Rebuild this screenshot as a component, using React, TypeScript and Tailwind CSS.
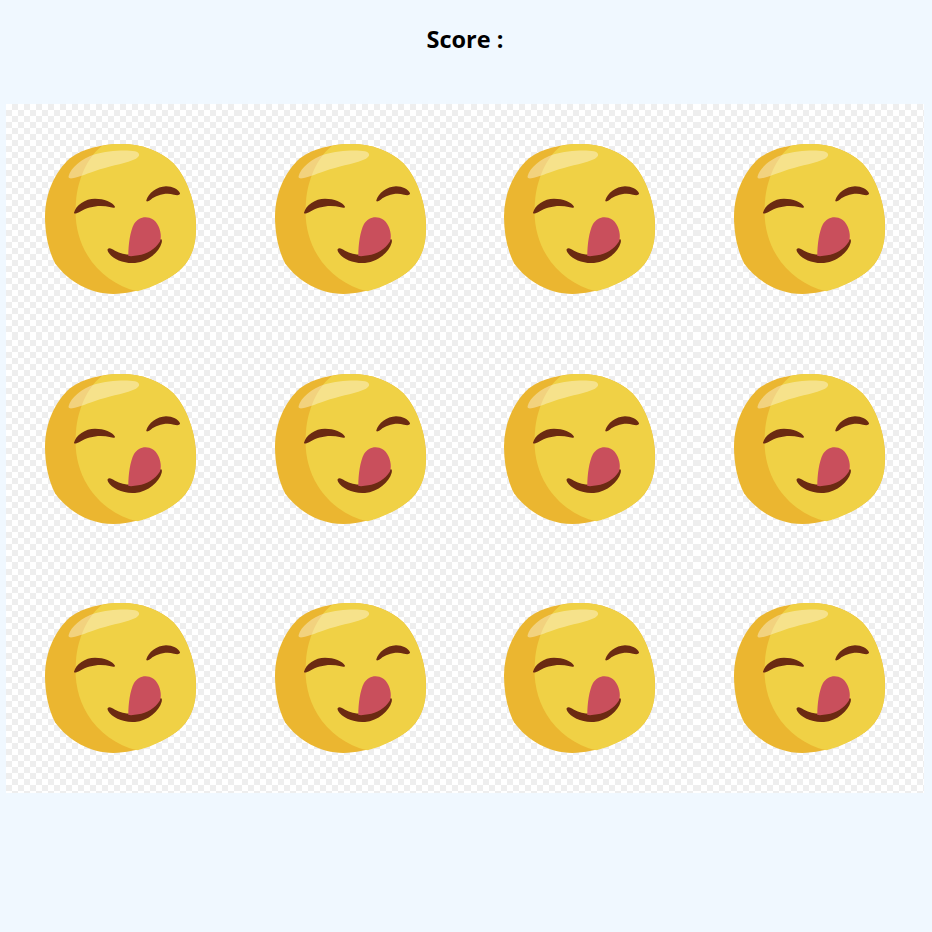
import React from 'react';

const Face = () => (
  <svg viewBox="18 42 688.5 688.5" className="block h-full w-full">
    {/* darker rim */}
    <path
      d="M365 162C425 162 480 182 520 220C560 262 588 340 588 410C588 460 578 500 545 535C505 575 410 612 340 612C270 612 205 575 165 520C145 480 135 430 135 380C135 310 165 245 210 205C250 175 305 162 365 162Z"
      fill="#ebb630"
    />
    {/* lighter face */}
    <path
      d="M305 168C325 163 345 162 365 162C425 162 480 182 520 220C560 262 588 340 588 410C588 460 578 500 545 535C515 565 460 592 412 604C350 590 295 550 262 495C235 450 222 395 228 335C233 270 260 205 305 168Z"
      fill="#f0d145"
    />
    {/* highlight */}
    <path
      d="M206 258C212 235 245 205 285 193C320 183 375 178 405 184C420 188 422 198 408 206C380 220 340 225 300 238C265 250 235 262 218 265C208 266 204 264 206 258Z"
      fill="#fff"
      fillOpacity="0.38"
    />
    {/* eyes */}
    <path
      d="M222 368C228 345 255 326 285 326C312 326 338 336 345 350C346 353 340 354 332 352C300 343 265 350 240 365C230 371 221 372 222 368Z"
      fill="#6b2a12"
    />
    <path
      d="M439 331C445 310 470 290 498 289C518 289 535 298 540 310C541 315 533 317 522 314C495 307 470 316 452 329C444 335 438 336 439 331Z"
      fill="#6b2a12"
    />
    {/* mouth */}
    <path
      d="M323 478C327 472 335 476 345 482C375 498 410 498 440 482C458 472 472 460 480 449C485 446 487 450 485 458C478 485 445 515 405 519C370 522 335 505 325 487C323 483 322 480 323 478Z"
      fill="#6b2a12"
    />
    {/* tongue */}
    <path
      d="M385 498C385 465 390 425 402 402C412 385 430 378 448 383C468 389 480 410 482 432C483 442 482 450 479 456C465 478 440 492 415 496C405 498 395 499 385 498Z"
      fill="#c94f5c"
    />
  </svg>
);

export default function App() {
  const cells = Array.from({ length: 12 }, (_, i) => i);

  return (
    <div className="min-h-[932px] bg-[#f0f8ff] font-['Open_Sans',sans-serif]">
      <h1 className="flex h-[104px] items-start justify-center pt-[23px] pr-[2px] text-[23.5px] leading-[32px] font-bold text-black">
        Score :
      </h1>
      <div className="ml-[6px] grid w-[918px] grid-cols-4 grid-rows-[repeat(3,229.5px)]">
        {cells.map(i => (
          <div
            key={i}
            className="bg-[repeating-conic-gradient(#eeeeee_0_25%,#ffffff_0_50%)] bg-[length:12px_12px]"
          >
            <Face />
          </div>
        ))}
      </div>
    </div>
  );
}
